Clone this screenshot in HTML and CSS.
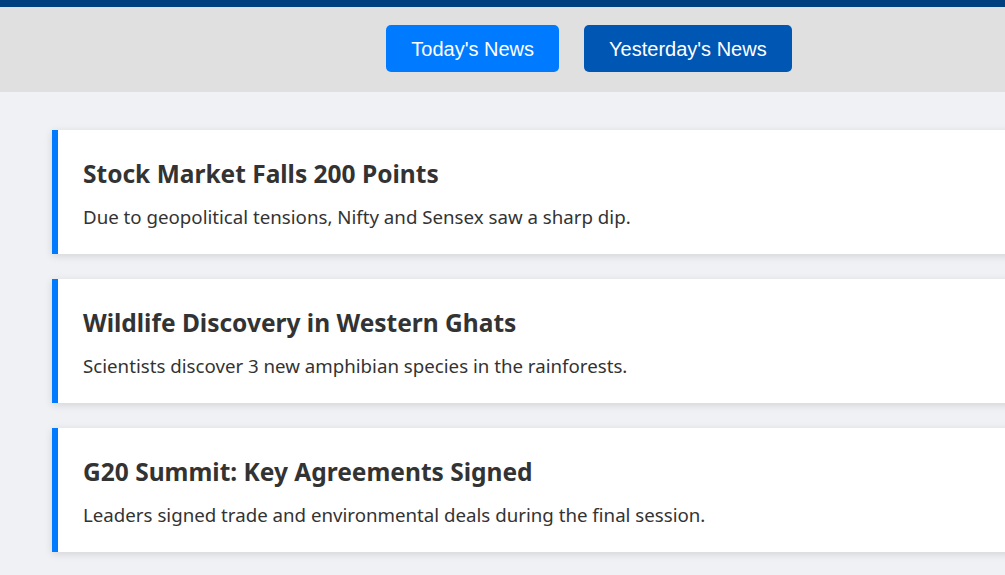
FILE: index.html
```html
<!DOCTYPE html>
<html lang="en">
<head>
<meta charset="utf-8">
<title>News</title>
<link rel="stylesheet" href="styles.css">
</head>
<body>
<div class="page">
  <header class="topbar">
    <nav class="tabs">
      <button class="tab tab-today">Today's News</button>
      <button class="tab tab-yesterday">Yesterday's News</button>
    </nav>
  </header>
  <main class="feed">
    <article class="card">
      <h2 class="card-title">Stock Market Falls 200 Points</h2>
      <p class="card-text">Due to geopolitical tensions, Nifty and Sensex saw a sharp dip.</p>
    </article>
    <article class="card">
      <h2 class="card-title">Wildlife Discovery in Western Ghats</h2>
      <p class="card-text">Scientists discover 3 new amphibian species in the rainforests.</p>
    </article>
    <article class="card">
      <h2 class="card-title">G20 Summit: Key Agreements Signed</h2>
      <p class="card-text">Leaders signed trade and environmental deals during the final session.</p>
    </article>
  </main>
</div>
</body>
</html>
```

FILE: styles.css
```css
html, body {
  margin: 0;
  padding: 0;
  overflow: hidden;
  background: #f0f1f5;
}

.page {
  width: 1178px;
  min-height: 575px;
  background: #f0f1f5;
  font-family: "Noto Sans", "Open Sans", sans-serif;
  color: #333333;
}

.topbar {
  background: #e0e0e0;
  border-top: 7px solid #00407f;
  padding: 18px 0 20px;
}

.tabs {
  display: flex;
  justify-content: center;
  gap: 25px;
}

.tab {
  font-family: "Liberation Sans", Arial, sans-serif;
  font-size: 20px;
  line-height: 24px;
  color: #ffffff;
  border: none;
  border-radius: 5px;
  padding: 12px 25px 11px;
  cursor: pointer;
}

.tab-today {
  background: #007bff;
}

.tab-yesterday {
  background: #0056b3;
}

.feed {
  display: flex;
  flex-direction: column;
  gap: 25px;
  padding: 38px 52px 22px;
}

.card {
  background: #ffffff;
  border-left: 6px solid #007bff;
  box-shadow: 0 2px 8px rgba(0, 0, 0, 0.12);
  padding: 28px 25px 25px;
}

.card-title {
  margin: 0 0 15px;
  font-size: 24.5px;
  line-height: 32px;
  font-weight: 700;
  color: #333333;
}

.card-text {
  margin: 0;
  font-size: 18.7px;
  line-height: 24px;
  color: #333333;
}
```
